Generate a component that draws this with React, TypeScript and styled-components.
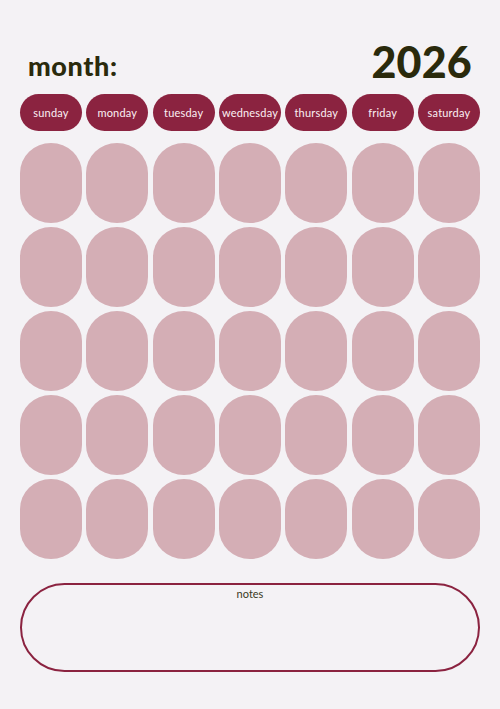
import * as React from "react";
import styled, {createGlobalStyle} from "styled-components";

const GlobalStyle = createGlobalStyle`
    html, body {
        margin: 0;
        padding: 0;
        background: #f4f2f5;
    }
    body {
        font-family: "Lato", "Liberation Sans", sans-serif;
    }
`;

const Page = styled.div`
    width: 500px;
    height: 709px;
    box-sizing: border-box;
    padding: 39px 20px 0 20px;
    display: flex;
    flex-direction: column;
`;

const Header = styled.div`
    display: flex;
    justify-content: space-between;
    align-items: flex-start;
    padding: 0 8px;
    margin-bottom: 10px;
    color: #2a2a0c;
`;

const Month = styled.div`
    margin-top: 15px;
    font-size: 27px;
    line-height: 24px;
    font-weight: 900;
    letter-spacing: 0.6px;
`;

const Year = styled.div`
    margin-top: 1px;
    font-size: 43px;
    line-height: 44px;
    font-weight: 900;
    letter-spacing: 0.2px;
`;

const Grid = styled.div`
    display: grid;
    grid-template-columns: repeat(7, 1fr);
    column-gap: 4.33px;
    row-gap: 4px;
`;

const DayPill = styled.div`
    height: 37px;
    border-radius: 19px;
    background: #8b2340;
    color: #fbf0f3;
    font-size: 11px;
    font-weight: 400;
    letter-spacing: 0.2px;
    display: flex;
    align-items: center;
    justify-content: center;
    margin-bottom: 8px;
`;

const DayCell = styled.div`
    height: 80px;
    border-radius: 31px / 30px;
    background: #d4aeb5;
`;

const Notes = styled.div`
    margin-top: 24px;
    height: 89px;
    box-sizing: border-box;
    border: 2px solid #8b2340;
    border-radius: 45px;
    text-align: center;
    color: #3a3a1c;
    font-size: 11px;
    padding-top: 2px;
`;

const days = ["sunday", "monday", "tuesday", "wednesday", "thursday", "friday", "saturday"];

export default function App() {
    const cells = Array.from({length: 35}, (_, i) => i);
    return (
        <Page>
            <GlobalStyle />
            <Header>
                <Month>month:</Month>
                <Year>2026</Year>
            </Header>
            <Grid>
                {days.map(d => <DayPill key={d}>{d}</DayPill>)}
                {cells.map(i => <DayCell key={i} />)}
            </Grid>
            <Notes>notes</Notes>
        </Page>
    );
}
